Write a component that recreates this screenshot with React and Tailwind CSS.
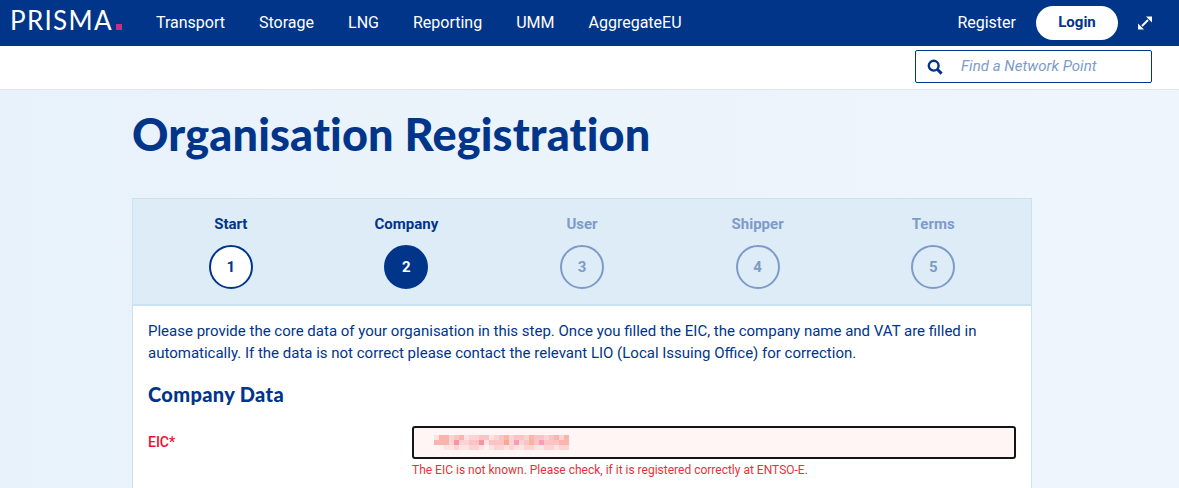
import React from "react";

const NAV = ["Transport", "Storage", "LNG", "Reporting", "UMM", "AggregateEU"];
const STEPS = [
  ["Start", 1, "done"],
  ["Company", 2, "active"],
  ["User", 3, "todo"],
  ["Shipper", 4, "todo"],
  ["Terms", 5, "todo"],
];

const A = "#f9b4ac", B = "#fbc3c3", C = "#fbd3d3", D = "#fde3e2", E = "#fef0ef", P = "#f793a5", O = "#f9a98f", Q = "#f9b59a", R = "#f89cba", T = "#fff4f3";
const BLUR = [
  [D, A, A, C, B, A, D, C, C, B, B, D, C, B, A, C, B, B, C, A, B, B, C, B, A, C, A],
  [A, A, A, C, P, C, C, B, B, P, D, B, B, B, O, C, R, C, B, Q, B, R, B, B, B, A, A],
  [T, E, D, D, C, D, D, C, C, D, E, D, C, C, D, C, D, D, C, C, D, D, C, C, D, C, C],
];

function Pixels() {
  return (
    <svg width="135" height="15" viewBox="0 0 135 15" className="block">
      {BLUR.map((row, y) =>
        row.map((c, x) => <rect key={x + "-" + y} x={x * 5} y={y * 5} width="5" height="5" fill={c} />)
      )}
    </svg>
  );
}

function Step({ label, n, state }) {
  const muted = state === "todo";
  return (
    <div className="flex flex-col items-center">
      <div className={`text-[15px] leading-[20px] font-bold mt-[15px] ${muted ? "text-[#7d9bc9]" : "text-[#003589]"}`}>
        {label}
      </div>
      <div
        className={`mt-[11px] w-[44px] h-[44px] rounded-full border-2 flex items-center justify-center text-[15px] font-bold ${
          state === "done"
            ? "bg-white border-[#003589] text-[#003589]"
            : state === "active"
            ? "bg-[#003589] border-[#003589] text-white"
            : "border-[#7d9bc9] text-[#7d9bc9]"
        }`}
      >
        {n}
      </div>
    </div>
  );
}

export default function App() {
  return (
    <div className="h-[488px] overflow-hidden font-['Roboto',sans-serif] bg-gradient-to-r from-[#e8f2fa] to-[#eff5fc]">
      <header className="h-[46px] bg-[#003589] flex items-center text-white">
        <div className="ml-[10px] mb-[6px] w-[113px] flex items-end relative">
          <span className="font-['Lato',sans-serif] text-[26px] leading-[28px] tracking-[1.3px] font-normal">PRISMA</span>
          <span className="absolute left-[106px] top-[18px] w-[6px] h-[6px] bg-[#cf2a8a]" />
        </div>
        <nav className="ml-[33px] flex gap-[34px] text-[16px] mb-[1px]">
          {NAV.map((n) => (
            <span key={n}>{n}</span>
          ))}
        </nav>
        <div className="ml-auto flex items-center">
          <span className="text-[16px] mb-[1px]">Register</span>
          <span className="ml-[20px] w-[82px] h-[34px] bg-white rounded-full text-[#003589] text-[15px] font-bold flex items-center justify-center pb-[1px]">
            Login
          </span>
          <svg className="ml-[20px] mr-[27px]" width="14" height="14" viewBox="0 0 14 14" fill="#fff">
            <path d="M8 0.5H14V6.5Z" />
            <path d="M0 13.5V7.5L6 13.5Z" />
            <path d="M4 10L10 4" stroke="#fff" strokeWidth="2" />
          </svg>
        </div>
      </header>

      <div className="h-[44px] bg-white border-b border-[#dfe5ea] flex justify-end pr-[27px] pt-[4px]">
        <div className="w-[237px] h-[33px] border border-[#003589] rounded-[2px] flex items-center bg-white">
          <svg className="ml-[11px]" width="16" height="16" viewBox="0 0 16 16" fill="none" stroke="#003589">
            <circle cx="6.7" cy="6.7" r="4.9" strokeWidth="2.4" />
            <path d="M10.5 10.5L14.6 14.6" strokeWidth="3" />
          </svg>
          <span className="ml-[18px] text-[15px] tracking-[0.03px] italic text-[#7d9bc9]">Find a Network Point</span>
        </div>
      </div>

      <main className="ml-[132px] w-[900px]">
        <h1 className="mt-[19px] h-[50px] font-['Lato',sans-serif] font-black text-[45px] tracking-[0.15px] leading-[50px] text-[#003589] whitespace-nowrap">
          Organisation Registration
        </h1>
        <section className="mt-[39px] bg-white border-x border-t border-[#c8e2f2] pb-[40px]">
          <div className="h-[107px] bg-[#deecf8] border-b-2 border-[#c8e2f2] grid grid-cols-5 px-[10px]">
            {STEPS.map(([l, n, s]) => (
              <Step key={n} label={l} n={n} state={s} />
            ))}
          </div>
          <div className="px-[15px] pt-[14px]">
            <p className="text-[15px] leading-[22px] text-[#003589]">
              Please provide the core data of your organisation in this step. Once you filled the EIC, the company name and VAT are filled in
              <br />
              automatically. If the data is not correct please contact the relevant LIO (Local Issuing Office) for correction.
            </p>
            <h2 className="mt-[18px] font-['Lato',sans-serif] font-black text-[20px] tracking-[0.35px] leading-[24px] text-[#003589]">Company Data</h2>
            <div className="mt-[20px] flex">
              <label className="w-[264px] pt-[6px] text-[14px] leading-[20px] font-medium text-[#e8112d]">EIC*</label>
              <div className="flex-1">
                <div className="h-[33px] border-2 border-[#141414] rounded-[3px] bg-[#fff5f4] flex items-center pl-[20px]">
                  <Pixels />
                </div>
                <p className="mt-[3px] text-[12px] leading-[16px] text-[#e8303c]">
                  The EIC is not known. Please check, if it is registered correctly at ENTSO-E.
                </p>
              </div>
            </div>
          </div>
        </section>
      </main>
    </div>
  );
}
